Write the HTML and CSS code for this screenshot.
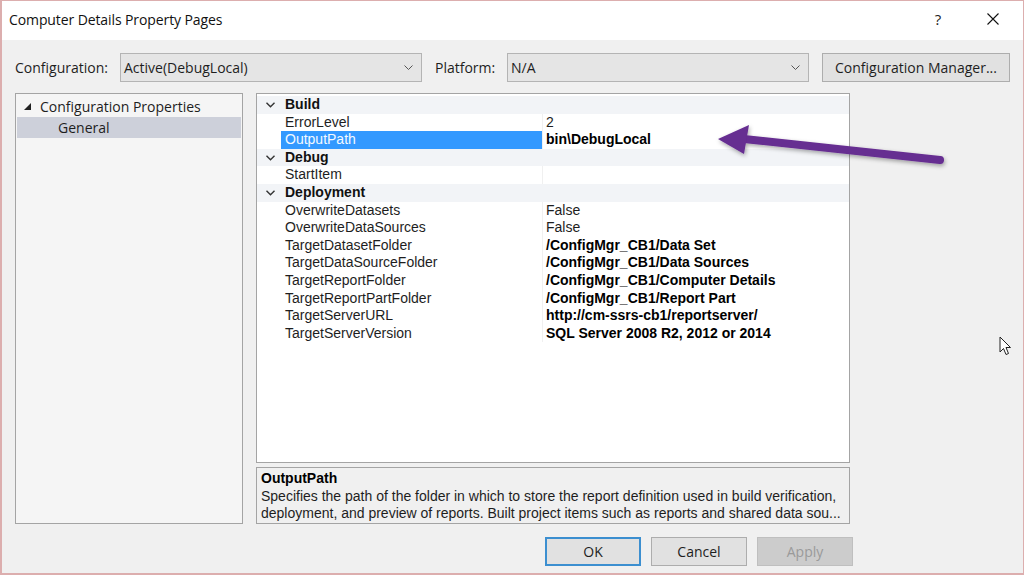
FILE: index.html
```html
<!DOCTYPE html>
<html lang="en">
<head>
    <meta charset="UTF-8">
    <title>Computer Details Property Pages</title>
    <link rel="stylesheet" href="styles.css">
</head>
<body>
    <div class="window">
        <div class="titlebar">
            <span class="title">Computer Details Property Pages</span>
            <div class="title-buttons">
                <span class="title-btn help">?</span>
                <span class="title-btn">
                    <svg width="12" height="12" viewBox="0 0 12 12"><path d="M0.5 0.5 L11.5 11.5 M11.5 0.5 L0.5 11.5" stroke="#111" stroke-width="1.1" fill="none"/></svg>
                </span>
            </div>
        </div>

        <div class="config-row">
            <span class="config-label">Configuration:</span>
            <div class="combo combo-config">
                <span>Active(DebugLocal)</span>
                <svg class="combo-arrow" width="9" height="5" viewBox="0 0 9 5"><path d="M0.5 0.5 L4.5 4.5 L8.5 0.5" stroke="#555" fill="none"/></svg>
            </div>
            <span class="config-label platform-label">Platform:</span>
            <div class="combo combo-platform">
                <span>N/A</span>
                <svg class="combo-arrow" width="9" height="5" viewBox="0 0 9 5"><path d="M0.5 0.5 L4.5 4.5 L8.5 0.5" stroke="#555" fill="none"/></svg>
            </div>
            <div class="button config-manager">Configuration Manager...</div>
        </div>

        <div class="main">
            <div class="tree">
                <div class="tree-item">
                    <svg class="tree-toggle" width="8" height="8" viewBox="0 0 8 8"><polygon points="7,0 7,7 0,7" fill="#222"/></svg>
                    <span>Configuration Properties</span>
                </div>
                <div class="tree-item child selected">General</div>
            </div>

            <div class="right-col">
                <div class="grid" id="grid"></div>
                <div class="description">
                    <div class="desc-title">OutputPath</div>
                    <div class="desc-line">Specifies the path of the folder in which to store the report definition used in build verification,</div>
                    <div class="desc-line">deployment, and preview of reports. Built project items such as reports and shared data sou...</div>
                </div>
            </div>
        </div>

        <div class="footer">
            <div class="button dialog-btn default">OK</div>
            <div class="button dialog-btn">Cancel</div>
            <div class="button dialog-btn disabled">Apply</div>
        </div>

        <!-- annotation arrow drawn over the screenshot -->
        <svg class="annotation" width="1024" height="575" viewBox="0 0 1024 575">
            <defs>
                <filter id="shadow" x="-10%" y="-50%" width="120%" height="200%">
                    <feDropShadow dx="1" dy="2" stdDeviation="2" flood-color="#000" flood-opacity="0.35"/>
                </filter>
            </defs>
            <g filter="url(#shadow)">
                <line x1="940" y1="160" x2="744" y2="139" stroke="#662d91" stroke-width="8" stroke-linecap="round"/>
                <polygon points="718,139 749,125 744,154" fill="#662d91"/>
            </g>
        </svg>

        <svg class="cursor" width="13" height="20" viewBox="0 0 13 20">
            <path d="M1 1 L1 16 L4.5 12.5 L7 18.5 L9.5 17.5 L7 11.5 L11.5 11.5 Z" fill="#fff" stroke="#222" stroke-width="1" stroke-linejoin="round"/>
        </svg>
    </div>

    <script>
        // property grid rows
        const rows = [
            { cat: 'Build' },
            { name: 'ErrorLevel', value: '2' },
            { name: 'OutputPath', value: 'bin\\DebugLocal', bold: true, selected: true },
            { cat: 'Debug' },
            { name: 'StartItem', value: '' },
            { cat: 'Deployment' },
            { name: 'OverwriteDatasets', value: 'False' },
            { name: 'OverwriteDataSources', value: 'False' },
            { name: 'TargetDatasetFolder', value: '/ConfigMgr_CB1/Data Set', bold: true },
            { name: 'TargetDataSourceFolder', value: '/ConfigMgr_CB1/Data Sources', bold: true },
            { name: 'TargetReportFolder', value: '/ConfigMgr_CB1/Computer Details', bold: true },
            { name: 'TargetReportPartFolder', value: '/ConfigMgr_CB1/Report Part', bold: true },
            { name: 'TargetServerURL', value: 'http://cm-ssrs-cb1/reportserver/', bold: true },
            { name: 'TargetServerVersion', value: 'SQL Server 2008 R2, 2012 or 2014', bold: true }
        ];

        const grid = document.getElementById('grid');
        rows.forEach(r => {
            const row = document.createElement('div');
            if (r.cat) {
                row.className = 'grid-row category';
                row.innerHTML = '<span class="gutter"><svg width="9" height="6" viewBox="0 0 9 6"><path d="M0.5 0.8 L4.5 4.8 L8.5 0.8" stroke="#333" stroke-width="1.4" fill="none"/></svg></span>' +
                    '<span class="cat-name">' + r.cat + '</span>';
            } else {
                row.className = 'grid-row' + (r.selected ? ' selected' : '');
                row.innerHTML = '<span class="gutter"></span>' +
                    '<span class="prop-name">' + r.name + '</span>' +
                    '<span class="prop-value' + (r.bold ? ' bold' : '') + '">' + r.value + '</span>';
            }
            grid.appendChild(row);
        });
    </script>
</body>
</html>
```

FILE: styles.css
```css
body {
    margin: 0;
    font-family: 'Open Sans', 'Noto Sans', sans-serif;
    font-size: 14px;
    color: #1e1e1e;
}
.window {
    position: relative;
    width: 1024px;
    height: 575px;
    box-sizing: border-box;
    border: 1px solid #dcaeae;
    border-left-width: 2px;
    border-bottom-width: 2px;
    background: #f0f0f0;
    display: flex;
    flex-direction: column;
    overflow: hidden;
}
.titlebar {
    height: 39px;
    flex-shrink: 0;
    background: #fff;
    display: flex;
    align-items: center;
    padding-left: 7px;
    padding-bottom: 3px;
    box-sizing: border-box;
}
.title {
    color: #111;
    letter-spacing: -0.1px;
}
.title-buttons {
    margin-left: auto;
    display: flex;
    align-items: center;
    padding-right: 7px;
}
.title-btn {
    width: 46px;
    height: 36px;
    display: flex;
    align-items: center;
    justify-content: center;
    font-size: 15px;
    color: #222;
}
.title-btn.help {
    margin-right: 9px;
}
.config-row {
    display: flex;
    align-items: center;
    margin-top: 13px;
    height: 29px;
    padding-left: 13px;
}
.config-label {
    width: 105px;
    flex-shrink: 0;
    color: #1e1e1e;
}
.platform-label {
    width: 72px;
    margin-left: 13px;
}
.combo {
    height: 29px;
    box-sizing: border-box;
    background: #e5e5e5;
    border: 1px solid #b4b4b4;
    display: flex;
    align-items: center;
    padding-left: 3px;
    padding-right: 8px;
}
.combo-config {
    width: 302px;
}
.combo-platform {
    width: 302px;
}
.combo-arrow {
    margin-left: auto;
}
.button {
    box-sizing: border-box;
    background: #e1e1e1;
    border: 1px solid #adadad;
    display: flex;
    align-items: center;
    justify-content: center;
    color: #1e1e1e;
}
.config-manager {
    width: 188px;
    height: 29px;
    margin-left: 13px;
}
.main {
    display: flex;
    margin-top: 11px;
    padding-left: 13px;
    gap: 13px;
}
.tree {
    width: 228px;
    height: 431px;
    box-sizing: border-box;
    background: #f5f5f5;
    border: 1px solid #a4a4a4;
    padding-top: 2px;
}
.tree-item {
    height: 21px;
    display: flex;
    align-items: center;
    padding-left: 8px;
}
.tree-toggle {
    margin-right: 8px;
    margin-top: 1px;
}
.tree-item.child {
    padding-left: 42px;
}
.tree-item.selected {
    background: #cdd0da;
    margin: 0 1px;
    padding-left: 41px;
}
.right-col {
    width: 594px;
    display: flex;
    flex-direction: column;
}
.grid {
    height: 370px;
    box-sizing: border-box;
    background: #fff;
    border: 1px solid #a4a4a4;
    padding-top: 2px;
    font-family: 'Liberation Sans', Arial, sans-serif;
    font-size: 14px;
}
.grid-row {
    display: grid;
    grid-template-columns: 24px 261px 1fr;
    height: 17.6px;
    line-height: 17.6px;
    color: #1e1e1e;
}
.grid-row.category {
    background: #f2f4f7;
}
.gutter {
    display: flex;
    align-items: center;
    justify-content: center;
    padding-left: 2px;
}
.cat-name {
    grid-column: 2 / 4;
    font-weight: bold;
    padding-left: 4px;
    color: #111;
}
.prop-name {
    padding-left: 4px;
    white-space: nowrap;
}
.prop-value {
    padding-left: 3px;
    white-space: nowrap;
    border-left: 1px solid #f0f0f0;
}
.prop-value.bold {
    font-weight: bold;
    color: #000;
}
.grid-row.selected .prop-name {
    background: #3399ff;
    color: #f4f9ff;
}
.description {
    margin-top: 4px;
    height: 57px;
    box-sizing: border-box;
    background: #f0f0f0;
    border: 1px solid #a4a4a4;
    padding: 2px 4px;
    font-family: 'Liberation Sans', Arial, sans-serif;
    font-size: 14px;
    line-height: 17.5px;
    color: #1e1e1e;
}
.desc-title {
    font-weight: bold;
    color: #000;
}
.desc-line {
    white-space: nowrap;
    overflow: hidden;
}
.footer {
    display: flex;
    gap: 10px;
    margin-top: 13px;
    padding-left: 543px;
}
.dialog-btn {
    width: 96px;
    height: 29px;
}
.dialog-btn.default {
    border: 2px solid #3c8fd0;
}
.dialog-btn.disabled {
    background: #cccccc;
    border-color: #bfbfbf;
    color: #9a9a9a;
}
.annotation {
    position: absolute;
    left: -2px;
    top: -1px;
    pointer-events: none;
}
.cursor {
    position: absolute;
    left: 997px;
    top: 335px;
}
```
